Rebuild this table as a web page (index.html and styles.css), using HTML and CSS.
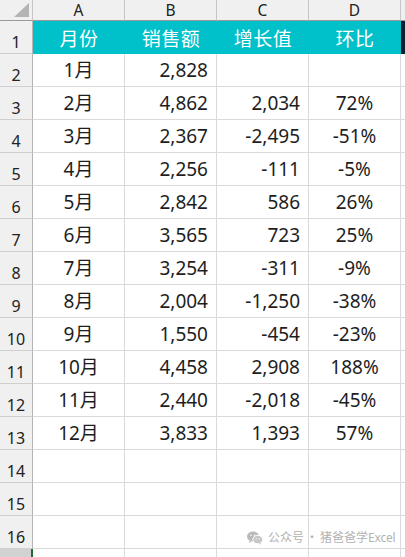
FILE: index.html
```html
<!DOCTYPE html>
<html lang="zh">
<head>
<meta charset="utf-8">
<link rel="stylesheet" href="styles.css">
</head>
<body>
<div class="sheet">
  <div class="corner"><span class="tri"></span></div>
  <div class="colh">A</div><div class="colh">B</div><div class="colh">C</div><div class="colh">D</div><div class="colh edge"></div>

  <div class="rowh">1</div>
  <div class="head">月份</div><div class="head">销售额</div><div class="head">增长值</div><div class="head">环比</div><div class="dark"></div>

  <div class="rowh">2</div><div class="c ctr">1月</div><div class="c num">2,828</div><div class="c num"></div><div class="c ctr"></div><div class="e"></div>
  <div class="rowh">3</div><div class="c ctr">2月</div><div class="c num">4,862</div><div class="c num">2,034</div><div class="c ctr">72%</div><div class="e"></div>
  <div class="rowh">4</div><div class="c ctr">3月</div><div class="c num">2,367</div><div class="c num">-2,495</div><div class="c ctr">-51%</div><div class="e"></div>
  <div class="rowh">5</div><div class="c ctr">4月</div><div class="c num">2,256</div><div class="c num">-111</div><div class="c ctr">-5%</div><div class="e"></div>
  <div class="rowh">6</div><div class="c ctr">5月</div><div class="c num">2,842</div><div class="c num">586</div><div class="c ctr">26%</div><div class="e"></div>
  <div class="rowh">7</div><div class="c ctr">6月</div><div class="c num">3,565</div><div class="c num">723</div><div class="c ctr">25%</div><div class="e"></div>
  <div class="rowh">8</div><div class="c ctr">7月</div><div class="c num">3,254</div><div class="c num">-311</div><div class="c ctr">-9%</div><div class="e"></div>
  <div class="rowh">9</div><div class="c ctr">8月</div><div class="c num">2,004</div><div class="c num">-1,250</div><div class="c ctr">-38%</div><div class="e"></div>
  <div class="rowh">10</div><div class="c ctr">9月</div><div class="c num">1,550</div><div class="c num">-454</div><div class="c ctr">-23%</div><div class="e"></div>
  <div class="rowh">11</div><div class="c ctr">10月</div><div class="c num">4,458</div><div class="c num">2,908</div><div class="c ctr">188%</div><div class="e"></div>
  <div class="rowh">12</div><div class="c ctr">11月</div><div class="c num">2,440</div><div class="c num">-2,018</div><div class="c ctr">-45%</div><div class="e"></div>
  <div class="rowh">13</div><div class="c ctr">12月</div><div class="c num">3,833</div><div class="c num">1,393</div><div class="c ctr">57%</div><div class="e"></div>
  <div class="rowh">14</div><div class="c"></div><div class="c"></div><div class="c"></div><div class="c"></div><div class="e"></div>
  <div class="rowh">15</div><div class="c"></div><div class="c"></div><div class="c"></div><div class="c"></div><div class="e"></div>
  <div class="rowh">16</div><div class="c"></div><div class="c"></div><div class="c"></div><div class="c"></div><div class="e"></div>
  <div class="rowh last"></div><div class="c sel"></div><div class="c"></div><div class="c"></div><div class="c"></div><div class="e"></div>

  <div class="watermark">
    <svg class="wx" width="16" height="14" viewBox="0 0 16 14">
      <ellipse cx="6" cy="5.5" rx="6" ry="5" fill="#b9b9b9"/>
      <path d="M2.5 9.5 L1.8 12 L4.6 10.3 Z" fill="#b9b9b9"/>
      <ellipse cx="10.8" cy="8.6" rx="5" ry="4.2" fill="#c6c6c6" stroke="#fff" stroke-width="1"/>
      <path d="M13.6 12 L14.6 13.8 L12 12.6 Z" fill="#c6c6c6"/>
      <circle cx="4" cy="4.2" r="0.8" fill="#fff"/>
      <circle cx="7.6" cy="4.2" r="0.8" fill="#fff"/>
      <circle cx="9.3" cy="7.8" r="0.65" fill="#fff"/>
      <circle cx="12.3" cy="7.8" r="0.65" fill="#fff"/>
    </svg>
    <span class="wm-text">公众号<span class="dot">·</span>猪爸爸学<span class="latin">Excel</span></span>
  </div>
</div>
</body>
</html>
```

FILE: styles.css
```css
html, body {
  margin: 0;
  padding: 0;
  background: #fff;
  overflow: hidden;
}
.sheet {
  position: relative;
  width: 405px;
  height: 557px;
  display: grid;
  grid-template-columns: 33px 92px 92px 92px 92px 4px;
  grid-template-rows: 21px repeat(17, 33px);
  font-family: "Noto Sans", "Noto Sans CJK SC", sans-serif;
  color: #1e1e1e;
}
.corner {
  background: #f0f0f0;
  border-right: 1px solid #c6c6c6;
  border-bottom: 1px solid #9a9a9a;
  box-sizing: border-box;
  position: relative;
}
.tri {
  position: absolute;
  right: 3px;
  bottom: 3px;
  width: 0;
  height: 0;
  border-left: 15px solid transparent;
  border-bottom: 14px solid #b4b4b4;
}
.colh {
  background: #f0f0f0;
  border-right: 1px solid #c6c6c6;
  border-bottom: 1px solid #9a9a9a;
  box-sizing: border-box;
  display: flex;
  align-items: flex-end;
  justify-content: center;
  font-size: 15.5px;
  line-height: 1;
  padding-bottom: 2px;
  color: #222;
}
.colh.edge { border-right: none; }
.rowh {
  background: #f0f0f0;
  border-right: 1px solid #b5b5b5;
  border-bottom: 1px solid #cfcfcf;
  box-sizing: border-box;
  display: flex;
  align-items: flex-end;
  justify-content: center;
  font-size: 16px;
  line-height: 1;
  padding-bottom: 3px;
  color: #222;
}
.rowh.last {
  background: #d2d2d2;
  border-right: 2px solid #1e6b3a;
}
.head {
  background: #00c0c9;
  color: #fff;
  font-family: "Noto Sans CJK SC", sans-serif;
  font-size: 19px;
  display: flex;
  align-items: center;
  justify-content: center;
  letter-spacing: 0.5px;
}
.dark { background: #0e1f33; }
.c {
  border-right: 1px solid #dadada;
  border-bottom: 1px solid #dadada;
  box-sizing: border-box;
  display: flex;
  align-items: center;
  font-size: 19px;
  line-height: 1;
}
.ctr { justify-content: center; }
.num { justify-content: flex-end; padding-right: 8px; }
.e { border-bottom: 1px solid #dadada; box-sizing: border-box; }
.watermark {
  position: absolute;
  left: 247px;
  top: 529px;
  display: flex;
  align-items: center;
  gap: 5px;
  color: #b3b3b3;
  font-family: "Noto Sans CJK SC", sans-serif;
  font-size: 12px;
  line-height: 16px;
  white-space: nowrap;
}
.wx { display: block; }
.dot { margin: 0 2px; }
.latin {
  font-family: "Noto Sans", sans-serif;
  letter-spacing: -0.2px;
}
```
